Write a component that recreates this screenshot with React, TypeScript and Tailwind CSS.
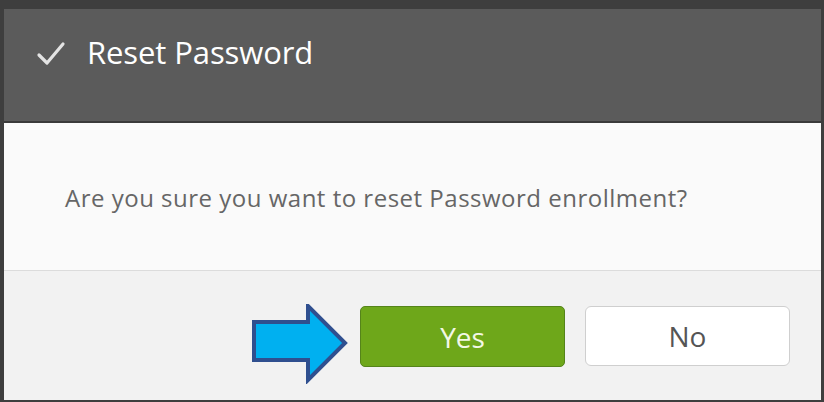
import React from "react";

export default function App() {
  return (
    <div
      className="w-[824px] h-[402px] bg-[#3e3e3e] pt-[9px] pl-[4px] pr-[3px] pb-[2px] flex flex-col overflow-hidden"
      style={{ fontFamily: '"Open Sans", "Liberation Sans", sans-serif' }}
    >
      <div className="h-[112px] bg-[#5b5b5b] flex items-center pl-[32px] pb-[26px] shrink-0">
        <svg width="30" height="26" viewBox="0 0 30 26" className="mr-[21px] mt-[4px]">
          <path d="M3 14 L11 22 L27 3" fill="none" stroke="#e4e4e4" strokeWidth="3.2" strokeLinecap="round" strokeLinejoin="round" />
        </svg>
        <span className="text-[31px] text-white leading-none tracking-[-0.1px]">Reset Password</span>
      </div>
      <div className="h-[2px] bg-[#3a3a3a] shrink-0" />
      <div className="h-[148px] bg-[#fafafa] border-b border-[#dcdcdc] flex items-center pl-[61px] pt-[2px] shrink-0">
        <span className="text-[24px] text-[#666666] leading-none tracking-[0.5px]">
          Are you sure you want to reset Password enrollment?
        </span>
      </div>
      <div className="flex-1 bg-[#f2f2f2] flex justify-end items-start pt-[35px] pr-[31px]">
        <svg width="100" height="80" viewBox="0 0 100 80" className="mr-[9px] -mt-[2px]">
          <polygon
            points="3,18 57,18 57,2 94,39 57,76 57,56 3,56"
            fill="#00b0f0"
            stroke="#2f4f8f"
            strokeWidth="4"
            strokeLinejoin="miter"
          />
        </svg>
        <button className="w-[205px] h-[61px] rounded-[5px] bg-[#6ea71a] border border-[#55841a] text-[28px] text-[#f3f8e6] leading-none flex items-center justify-center">
          Yes
        </button>
        <button className="ml-[20px] w-[205px] h-[60px] rounded-[6px] bg-white border border-[#cfcfcf] text-[28px] text-[#555555] leading-none flex items-center justify-center">
          No
        </button>
      </div>
    </div>
  );
}
